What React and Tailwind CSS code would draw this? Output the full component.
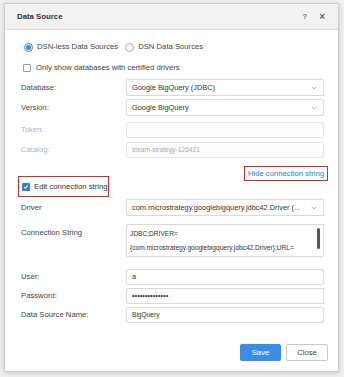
import { ChevronDown } from "lucide-react";

const font = { fontFamily: '"Liberation Sans", Arial, sans-serif' };

const Row = ({ label, muted, children, className = "" }) => (
  <div className={`flex items-center ${className}`}>
    <div
      className={`w-[105px] shrink-0 text-[7.7px] ${
        muted ? "text-[#b4b4b4]" : "text-[#444]"
      }`}
    >
      {label}
    </div>
    <div className="flex-1">{children}</div>
  </div>
);

const Select = ({ value }) => (
  <div className="flex items-center h-[17px] border border-[#d9d9d9] rounded-[2px] bg-white pl-[5px] pr-[5px]">
    <span className="flex-1 truncate text-[7.4px] text-[#333]">{value}</span>
    <ChevronDown size={8} strokeWidth={1.5} className="text-[#777] shrink-0" />
  </div>
);

const Input = ({ value, light, small, disabled }) => (
  <div
    className={`flex items-center h-[16px] border rounded-[2px] pl-[5px] ${
      disabled ? "border-[#e6e6e6] bg-[#fdfdfd]" : "border-[#d9d9d9] bg-white"
    }`}
  >
    <span
      className={`${small ? "text-[6.6px]" : "text-[7.4px]"} ${
        light ? "text-[#aaa]" : "text-[#333]"
      }`}
    >
      {value}
    </span>
  </div>
);

const App = () => {
  return (
    <div
      className="w-[344px] h-[377px] bg-[#efefef] overflow-hidden pt-[3px] pl-[4px]"
      style={font}
    >
      <div className="w-[335px] h-[369px] bg-white border border-[#cdcdcd] shadow-[0_1px_4px_rgba(0,0,0,0.18)] flex flex-col">
        {/* header */}
        <div className="h-[26px] bg-[#f2f2f2] border-b border-[#dcdcdc] flex items-center pl-[12px] pr-[13px]">
          <span className="flex-1 text-[7.8px] font-semibold text-[#333]">
            Data Source
          </span>
          <span className="text-[8px] text-[#777] font-bold mr-[12px]">?</span>
          <span className="text-[10px] text-[#666] font-bold leading-none">
            ×
          </span>
        </div>

        <div className="flex flex-col pl-[16px] pr-[14px]">
          {/* radios */}
          <div className="flex items-center h-[12px] mt-[11px] text-[7.7px] text-[#444]">
            <span className="w-[9px] h-[9px] rounded-full border border-[#2f8ae5] flex items-center justify-center ml-[3px] mr-[4px]">
              <span className="w-[5px] h-[5px] rounded-full bg-[#2f8ae5]" />
            </span>
            <span>DSN-less Data Sources</span>
            <span className="w-[9px] h-[9px] rounded-full border border-[#aaa] ml-[7px] mr-[4px]" />
            <span>DSN Data Sources</span>
          </div>

          {/* certified */}
          <div className="flex items-center h-[12px] mt-[9px] text-[7.7px] text-[#444]">
            <span className="w-[8px] h-[8px] border border-[#999] rounded-[1px] ml-[2px] mr-[5px]" />
            <span>Only show databases with certified drivers</span>
          </div>

          <Row label="Database:" className="mt-[5px]">
            <Select value="Google BigQuery (JDBC)" />
          </Row>
          <Row label="Version:" className="mt-[3px]">
            <Select value="Google BigQuery" />
          </Row>
          <Row label="Token:" muted className="mt-[6px]">
            <Input value="" disabled />
          </Row>
          <Row label="Catalog:" muted className="mt-[4px]">
            <Input value="steam-strategy-126421" light small disabled />
          </Row>

          {/* hide link */}
          <div className="flex justify-end mt-[8px] -mr-[4px]">
            <div className="h-[15px] border-[1.5px] border-[#e8231f] flex items-center px-[3px]">
              <span className="text-[7.7px] text-[#1f84d2]">
                Hide connection string
              </span>
            </div>
          </div>

          {/* edit connection string */}
          <div className="flex -mt-[5px] -ml-[3px]">
            <div className="h-[21px] w-[91px] border-[1.5px] border-[#e8231f] flex items-center pl-[3px]">
              <span className="w-[8px] h-[8px] bg-[#2f7fd6] rounded-[1px] flex items-center justify-center mr-[4px]">
                <svg width="6" height="6" viewBox="0 0 10 10">
                  <path
                    d="M2 5.2l2 2 4-4.6"
                    fill="none"
                    stroke="#fff"
                    strokeWidth="1.8"
                  />
                </svg>
              </span>
              <span className="text-[7.7px] text-[#333]">
                Edit connection string
              </span>
            </div>
          </div>

          <Row label="Driver" className="mt-[2px]">
            <Select value="com.microstrategy.googlebigquery.jdbc42.Driver (..." />
          </Row>

          {/* connection string */}
          <div className="flex items-start mt-[8px]">
            <div className="w-[105px] shrink-0 text-[7.7px] text-[#444] pt-[3px]">
              Connection String
            </div>
            <div className="flex-1 h-[33px] border border-[#d9d9d9] rounded-[2px] flex pl-[3px] pr-[3px] pt-[2px]">
              <div className="flex-1 text-[6.6px] leading-[14px] text-[#333]">
                <div>JDBC;DRIVER=</div>
                <div className="whitespace-nowrap">
                  {"{com.microstrategy.googlebigquery.jdbc42.Driver};URL="}
                </div>
              </div>
              <div className="w-[3px] h-[21px] rounded-full bg-[#555] mt-[1px]" />
            </div>
          </div>

          <Row label="User:" className="mt-[12px]">
            <Input value="a" />
          </Row>
          <Row label="Password:" className="mt-[3px]">
            <Input value="••••••••••••••" />
          </Row>
          <Row label="Data Source Name:" className="mt-[3px]">
            <Input value="BigQuery" small />
          </Row>

          {/* buttons */}
          <div className="flex justify-end gap-[5px] mt-[21px] -mr-[4px]">
            <button className="w-[41px] h-[17px] bg-[#3a8ee8] text-white text-[7.7px] rounded-[2px]">
              Save
            </button>
            <button className="w-[42px] h-[17px] bg-white border border-[#c8c8c8] text-[#444] text-[7.7px] rounded-[2px]">
              Close
            </button>
          </div>
        </div>
      </div>
    </div>
  );
};

export default App;
